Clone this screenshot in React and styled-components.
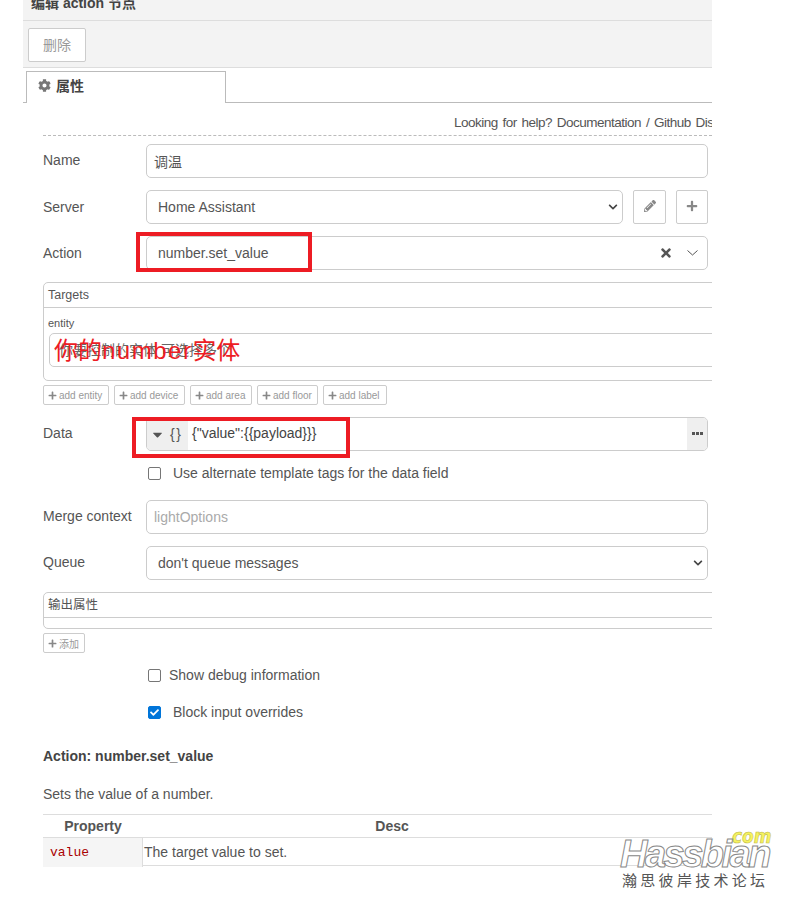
import React from 'react';
import styled, { createGlobalStyle } from 'styled-components';
import { FaCog, FaPencilAlt, FaPlus, FaCaretDown, FaChevronDown, FaTimes, FaCheck } from 'react-icons/fa';

const Global = createGlobalStyle`
  html, body { margin: 0; padding: 0; background: #fff; }
  body {
    font-family: "Liberation Sans", "Noto Sans CJK SC", sans-serif;
    font-size: 14px;
    color: #555;
  }
`;

const Page = styled.div`
  position: relative;
  width: 795px;
  height: 899px;
  overflow: hidden;
`;

const Panel = styled.div`
  width: 689px;
  height: 899px;
  margin-left: 23px;
  overflow: hidden;
  background: #fff;
`;

const TitleBar = styled.div`
  height: 20px;
  background: #f3f3f3;
  border-bottom: 1px solid #ddd;
  padding-left: 8px;
  font-weight: bold;
  font-size: 14px;
  line-height: 6px;
  color: #444;
  overflow: hidden;
`;

const Toolbar = styled.div`
  height: 47px;
  box-sizing: border-box;
  background: #f3f3f3;
  border-bottom: 1px solid #ddd;
  padding: 7px 5px;
`;

const DeleteButton = styled.button`
  width: 58px;
  height: 34px;
  background: #fff;
  border: 1px solid #ccc;
  border-radius: 2px;
  color: #999;
  font: inherit;
  padding: 0 0 2px;
`;

const TabStrip = styled.div`
  height: 35px;
  box-sizing: border-box;
  border-bottom: 1px solid #bbb;
  padding: 3px 0 0 3px;
`;

const Tab = styled.div`
  width: 200px;
  height: 32px;
  box-sizing: border-box;
  background: #fff;
  border: 1px solid #bbb;
  border-bottom: none;
  display: flex;
  align-items: center;
  gap: 5px;
  padding: 0 0 5px 11px;
  font-weight: bold;
  color: #444;

  svg { color: #777; font-size: 13px; }
`;

const Form = styled.div`
  padding: 0 0 0 20px;
`;

const HelpLine = styled.div`
  height: 33px;
  box-sizing: border-box;
  border-bottom: 1px dashed #bbb;
  padding: 12px 0 0 411px;
  font-size: 13.5px;
  line-height: 16px;
  letter-spacing: -0.5px;
  word-spacing: 1.5px;
  white-space: nowrap;
`;

const Row = styled.div`
  display: flex;
  width: 665px;
  height: 34px;
  margin-top: ${(p) => p.$top || 12}px;
`;

const Label = styled.div`
  width: 103px;
  flex: none;
  font-size: 14px;
  line-height: 34px;
  ${(p) => p.$raised && 'margin-top: -1px;'}
`;

const Field = styled.div`
  flex: 1;
  min-width: 0;
  height: 34px;
  box-sizing: border-box;
  display: flex;
  align-items: center;
  padding: 0 ${(p) => p.$right || 9}px 0 ${(p) => p.$left || 11}px;
  border: 1px solid #ccc;
  border-radius: 5px;
  background: #fff;
  color: ${(p) => (p.$placeholder ? '#aaa' : '#555')};
  font-size: 14px;
`;

const FieldText = styled.span`
  flex: 1;
`;

const SmallButton = styled.div`
  width: ${(p) => p.$w || 33}px;
  height: 34px;
  box-sizing: border-box;
  flex: none;
  margin-left: 10px;
  padding-bottom: 2px;
  border: 1px solid #ccc;
  border-radius: 2px;
  display: flex;
  align-items: center;
  justify-content: center;
  color: #888;
  font-size: 12px;
`;

const TargetBox = styled.div`
  width: 720px;
  height: ${(p) => p.$h}px;
  box-sizing: border-box;
  margin-top: 12px;
  border: 1px solid #ccc;
  border-radius: 5px;
`;

const BoxHeader = styled.div`
  height: 25px;
  box-sizing: border-box;
  border-bottom: 1px solid #ccc;
  padding-left: 4px;
  font-size: 12.5px;
  line-height: 25px;
`;

const EntityLabel = styled.div`
  margin: 9px 0 0 4px;
  font-size: 11px;
  line-height: 12px;
`;

const EntityInput = styled.div`
  height: 34px;
  box-sizing: border-box;
  margin: 4px 0 0 5px;
  border: 1px solid #ccc;
  border-radius: 5px;
  padding-left: 9px;
  font-size: 14px;
  line-height: 32px;
  color: #666;
`;

const AddRow = styled.div`
  display: flex;
  gap: 5px;
  margin-top: 4px;
`;

const AddButton = styled.div`
  width: ${(p) => p.$w}px;
  height: 20px;
  box-sizing: border-box;
  display: flex;
  align-items: center;
  gap: 2px;
  padding-left: 4px;
  border: 1px solid #ccc;
  border-radius: 2px;
  font-size: 10px;
  white-space: nowrap;
  color: #999;

  svg { font-size: 9px; color: #888; }
`;

const Editor = styled.div`
  flex: 1;
  height: 34px;
  box-sizing: border-box;
  display: flex;
  align-items: stretch;
  border: 1px solid #ccc;
  border-radius: 5px;
  overflow: hidden;
`;

const TypePicker = styled.div`
  width: 41px;
  flex: none;
  display: flex;
  align-items: center;
  gap: 5px;
  padding-left: 3px;
  box-sizing: border-box;
  background: #efefef;
  font-size: 14px;
  letter-spacing: 1.5px;
  color: #555;

  svg { font-size: 15px; flex: none; }
`;

const EditorValue = styled.div`
  flex: 1;
  padding-left: 4px;
  line-height: 31px;
  font-size: 14px;
  color: #444;
`;

const ExpandButton = styled.div`
  width: 20px;
  flex: none;
  padding-bottom: 2px;
  box-sizing: border-box;
  display: flex;
  align-items: center;
  justify-content: center;
  background: #efefef;
  color: #555;
`;

const CheckRow = styled.label`
  display: flex;
  align-items: center;
  height: 16px;
  margin: ${(p) => p.$top}px 0 0 105px;
  gap: ${(p) => p.$gap}px;
  font-size: 14px;
`;

const Box = styled.span`
  width: 13px;
  height: 13px;
  box-sizing: border-box;
  flex: none;
  border-radius: 2px;
  display: flex;
  align-items: center;
  justify-content: center;
  border: 1px solid ${(p) => (p.$checked ? '#0075d9' : '#767676')};
  background: ${(p) => (p.$checked ? '#0075d9' : '#fff')};
  color: #fff;
  font-size: 9px;
`;

const DocTitle = styled.div`
  margin-top: 28px;
  font-weight: bold;
  font-size: 14px;
  line-height: 16px;
  color: #444;
`;

const DocText = styled.div`
  margin-top: 22px;
  font-size: 14px;
  line-height: 16px;
`;

const DocTable = styled.div`
  width: 669px;
  margin-top: 12px;
  border-top: 1px solid #ddd;
  border-bottom: 1px solid #ddd;
`;

const DocHead = styled.div`
  display: grid;
  grid-template-columns: 100px 498px;
  height: 22px;
  border-bottom: 1px solid #ddd;
  font-weight: bold;
  line-height: 23px;
  text-align: center;
  color: #555;
`;

const DocRow = styled.div`
  display: grid;
  grid-template-columns: 100px 1fr;
  height: 27px;
  line-height: 29px;
`;

const CodeCell = styled.div`
  background: #f5f5f5;
  border-right: 1px solid #ddd;
  padding-left: 7px;
  font-family: "Liberation Mono", monospace;
  font-size: 13px;
  color: #a00;
`;

const DescCell = styled.div`
  padding-left: 1px;
`;

const RedFrame = styled.div`
  position: absolute;
  box-sizing: border-box;
  left: ${(p) => p.$x}px;
  top: ${(p) => p.$y}px;
  width: ${(p) => p.$w}px;
  height: ${(p) => p.$h}px;
  border: 4px solid #ed1c24;
`;

const RedNote = styled.div`
  position: absolute;
  left: 54px;
  top: 334px;
  font-size: 24px;
  line-height: 34px;
  color: #ed1c24;
  white-space: nowrap;
`;

const RedLatin = styled.span`
  letter-spacing: 1.5px;
`;

const Watermark = styled.div`
  position: absolute;
  left: 620px;
  top: 828px;
  width: 160px;
`;

const WaterCom = styled.div`
  position: absolute;
  left: 112px;
  top: -2px;
  font-family: "DejaVu Sans", sans-serif;
  font-style: italic;
  font-weight: bold;
  font-size: 20px;
  line-height: 20px;
  color: #f6f25e;
  -webkit-text-stroke: 0.6px #bdb84c;
  transform: scaleX(0.85);
  transform-origin: left top;
`;

const WaterName = styled.div`
  position: absolute;
  left: 0;
  top: 6px;
  font-family: "Liberation Sans", sans-serif;
  font-style: italic;
  font-weight: bold;
  font-size: 38px;
  line-height: 40px;
  letter-spacing: -2.5px;
  color: #fff;
  -webkit-text-stroke: 1px #888;
`;

const WaterCaption = styled.div`
  position: absolute;
  left: 2px;
  top: 44px;
  font-size: 15px;
  line-height: 18px;
  letter-spacing: 3.3px;
  color: #555;
  white-space: nowrap;
`;

const selectArrow = <FaChevronDown size={10} color="#444" />;

function App() {
  return (
    <Page>
      <Global />
      <Panel>
        <TitleBar>编辑 action 节点</TitleBar>
        <Toolbar>
          <DeleteButton>删除</DeleteButton>
        </Toolbar>
        <TabStrip>
          <Tab><FaCog />属性</Tab>
        </TabStrip>
        <Form>
          <HelpLine>Looking for help? Documentation / Github Discussions</HelpLine>

          <Row $top={8}>
            <Label $raised>Name</Label>
            <Field $left={7}>调温</Field>
          </Row>
          <Row>
            <Label>Server</Label>
            <Field $right={4}>
              <FieldText>Home Assistant</FieldText>
              {selectArrow}
            </Field>
            <SmallButton><FaPencilAlt /></SmallButton>
            <SmallButton $w={32}><FaPlus /></SmallButton>
          </Row>
          <Row>
            <Label>Action</Label>
            <Field>
              <FieldText>number.set_value</FieldText>
              <FaTimes size={14} color="#555" />
              <svg width="11" height="6" viewBox="0 0 11 6" style={{ marginLeft: 14 }}>
                <path d="M0.5 0.5 L5.5 5 L10.5 0.5" fill="none" stroke="#555" />
              </svg>
            </Field>
          </Row>

          <TargetBox $h={99}>
            <BoxHeader>Targets</BoxHeader>
            <EntityLabel>entity</EntityLabel>
            <EntityInput>你要控制的实体 可选择多个</EntityInput>
          </TargetBox>
          <AddRow>
            <AddButton $w={66}><FaPlus />add entity</AddButton>
            <AddButton $w={71}><FaPlus />add device</AddButton>
            <AddButton $w={62}><FaPlus />add area</AddButton>
            <AddButton $w={61}><FaPlus />add floor</AddButton>
            <AddButton $w={64}><FaPlus />add label</AddButton>
          </AddRow>

          <Row>
            <Label $raised>Data</Label>
            <Editor>
              <TypePicker><FaCaretDown />{'{}'}</TypePicker>
              <EditorValue>{'{"value":{{payload}}}'}</EditorValue>
              <ExpandButton>
                <svg width="11" height="3" viewBox="0 0 11 3" fill="currentColor">
                  <rect x="0" width="3" height="3" />
                  <rect x="4" width="3" height="3" />
                  <rect x="8" width="3" height="3" />
                </svg>
              </ExpandButton>
            </Editor>
          </Row>
          <CheckRow $top={14} $gap={12}>
            <Box />
            Use alternate template tags for the data field
          </CheckRow>

          <Row $top={19}>
            <Label $raised>Merge context</Label>
            <Field $placeholder $left={7}>lightOptions</Field>
          </Row>
          <Row>
            <Label $raised>Queue</Label>
            <Field $right={4}>
              <FieldText>don't queue messages</FieldText>
              {selectArrow}
            </Field>
          </Row>

          <TargetBox $h={37}>
            <BoxHeader>输出属性</BoxHeader>
          </TargetBox>
          <AddRow>
            <AddButton $w={42}><FaPlus />添加</AddButton>
          </AddRow>

          <CheckRow $top={14} $gap={8}>
            <Box />
            Show debug information
          </CheckRow>
          <CheckRow $top={21} $gap={12}>
            <Box $checked><FaCheck /></Box>
            Block input overrides
          </CheckRow>

          <DocTitle>Action: number.set_value</DocTitle>
          <DocText>Sets the value of a number.</DocText>
          <DocTable>
            <DocHead>
              <div>Property</div>
              <div>Desc</div>
            </DocHead>
            <DocRow>
              <CodeCell>value</CodeCell>
              <DescCell>The target value to set.</DescCell>
            </DocRow>
          </DocTable>
        </Form>
      </Panel>

      <RedFrame $x={136} $y={232} $w={176} $h={40} />
      <RedFrame $x={132} $y={417} $w={218} $h={41} />
      <RedNote>你的<RedLatin>number</RedLatin>实体</RedNote>

      <Watermark>
        <WaterCom>com</WaterCom>
        <WaterName>Hassbian</WaterName>
        <WaterCaption>瀚思彼岸技术论坛</WaterCaption>
      </Watermark>
    </Page>
  );
}

export default App;
